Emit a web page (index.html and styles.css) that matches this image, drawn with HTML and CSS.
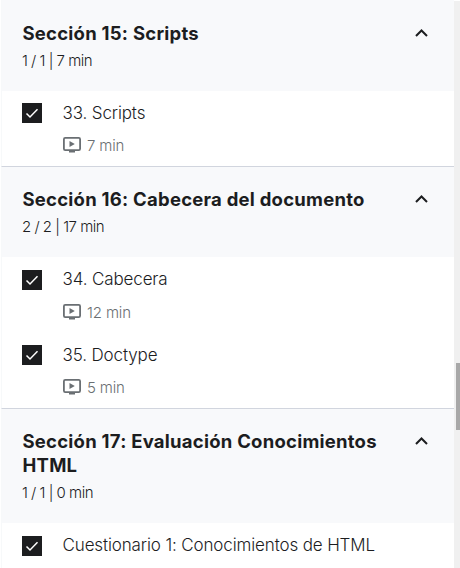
FILE: index.html
```html
<!DOCTYPE html>
<html lang="es">
<head>
<meta charset="utf-8">
<title>Contenido del curso</title>
<link rel="stylesheet" href="styles.css">
</head>
<body>
<svg class="defs" width="0" height="0">
  <symbol id="chevron" viewBox="0 0 14 8"><path d="M2 7 L7.500 1.500 L13 7" fill="none" stroke="currentColor" stroke-width="2"/></symbol>
  <symbol id="check" viewBox="0 0 20 20"><path d="M4.500 10.500 L8 14 L15.500 6.300" fill="none" stroke="currentColor" stroke-width="1.500"/></symbol>
  <symbol id="video" viewBox="0 0 18 16"><rect x=".9" y=".9" width="16.200" height="12.200" rx="1.300" fill="none" stroke="currentColor" stroke-width="1.800"/><path d="M6 13h6v2.500H6zM6.500 4v6l5.300-3z" fill="currentColor"/></symbol>
</svg>
<div class="layout">
  <main class="panel">
    <section class="section">
      <header class="head">
        <div><h2 class="title">Sección 15: Scripts</h2><p class="meta">1 / 1 | 7 min</p></div>
        <svg class="chevron"><use href="#chevron"/></svg>
      </header>
      <ul class="items">
        <li class="item"><svg class="check"><use href="#check"/></svg>
          <div><p class="name">33. Scripts</p><p class="duration"><svg class="video"><use href="#video"/></svg>7 min</p></div></li>
      </ul>
    </section>
    <section class="section">
      <header class="head">
        <div><h2 class="title">Sección 16: Cabecera del documento</h2><p class="meta">2 / 2 | 17 min</p></div>
        <svg class="chevron"><use href="#chevron"/></svg>
      </header>
      <ul class="items two">
        <li class="item"><svg class="check"><use href="#check"/></svg>
          <div><p class="name">34. Cabecera</p><p class="duration"><svg class="video"><use href="#video"/></svg>12 min</p></div></li>
        <li class="item"><svg class="check"><use href="#check"/></svg>
          <div><p class="name">35. Doctype</p><p class="duration"><svg class="video"><use href="#video"/></svg>5 min</p></div></li>
      </ul>
    </section>
    <section class="section">
      <header class="head">
        <div><h2 class="title">Sección 17: Evaluación Conocimientos HTML</h2><p class="meta">1 / 1 | 0 min</p></div>
        <svg class="chevron"><use href="#chevron"/></svg>
      </header>
      <ul class="items quiz">
        <li class="item"><svg class="check"><use href="#check"/></svg>
          <div><p class="name">Cuestionario 1: Conocimientos de HTML</p></div></li>
      </ul>
    </section>
  </main>
  <div class="scrollbar"><div class="thumb"></div></div>
</div>
</body>
</html>
```

FILE: styles.css
```css
* { box-sizing: border-box; margin: 0; padding: 0; }
body { height: 568px; overflow: hidden; background: #fff; color: #1c1d1f; font-family: Inter, "Liberation Sans", sans-serif; }
.defs { display: none; }
.layout { display: flex; height: 568px; }
.panel { width: 454px; padding-left: 1px; overflow: hidden; }
.section { border-left: 1px solid #f7f9fa; }
.section + .section { border-top: 1px solid #d1d5de; }
.head { display: flex; justify-content: space-between; padding: 21px 26px 19px 20px; background: #f8f9fb; }
.section + .section .head { padding-top: 20px; }
.head > div { width: 372px; }
.title { font-size: 18.500px; line-height: 24px; font-weight: 700; letter-spacing: .24px; padding-left: .5px; }
.meta { margin-top: 4px; font-size: 15px; line-height: 23px; font-weight: 300; letter-spacing: -.5px; }
.chevron { width: 14px; height: 8px; margin-top: 8px; flex: none; }
.items { list-style: none; }
.item { display: flex; height: 75px; padding: 12px 20px 0; }
.two .item { height: 75px; padding-top: 12px; }
.two .item:first-child { height: 76px; padding-top: 13px; }
.two .item:first-child .name { margin-top: -3px; }
.two .item:first-child .duration { margin-top: 11px; }
.quiz .item { padding-top: 13px; }
.check { width: 20px; height: 20px; margin-right: 21px; flex: none; background: #1c1d1f; color: #fff; }
.name { font-size: 17px; line-height: 24px; margin-top: -2px; margin-left: -.5px; font-weight: 300; letter-spacing: -.13px; white-space: nowrap; }
.quiz .name { margin-top: -3px; }
.duration { display: flex; align-items: center; height: 20px; margin-top: 10px; color: #6a6f73; font-size: 15px; font-weight: 300; letter-spacing: -.15px; }
.video { width: 18px; height: 16px; margin-right: 6px; }
.scrollbar { width: 6px; height: 567px; margin-top: 1px; background: #f0f0f0; padding: 362px 0 0 2px; }
.thumb { width: 4px; height: 67px; background: #a8a8a8; }
```
